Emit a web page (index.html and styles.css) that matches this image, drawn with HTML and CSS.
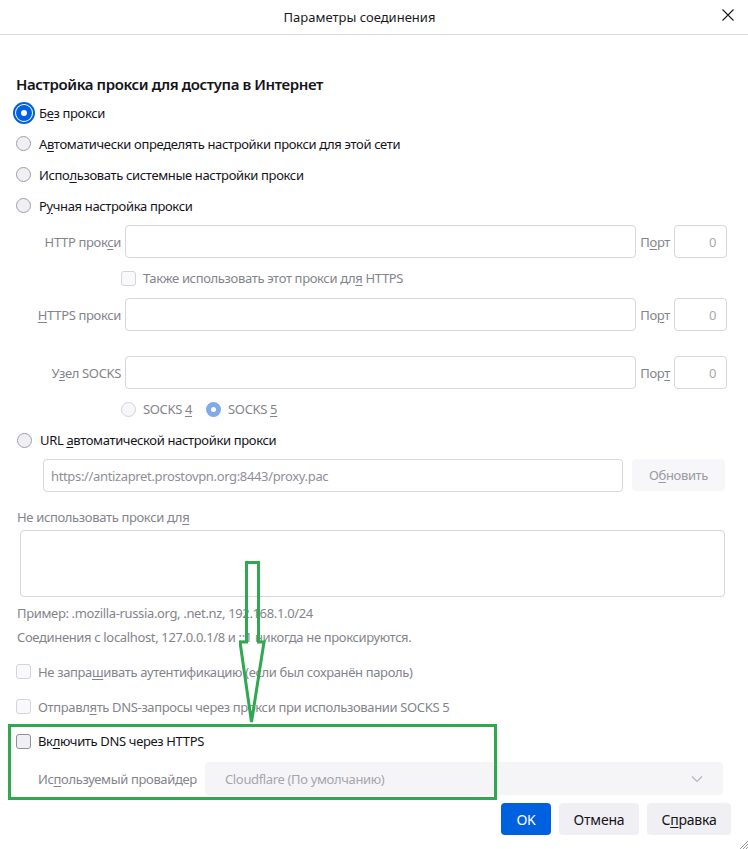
FILE: index.html
```html
<!DOCTYPE html>
<html lang="ru">
<head>
<meta charset="utf-8">
<title>Параметры соединения</title>
<link rel="stylesheet" href="styles.css">
</head>
<body>
<div class="dialog">
  <header class="titlebar">
    <span class="title">Параметры соединения</span>
    <svg class="close" width="12" height="12" viewBox="0 0 12 12"><path d="M0.5 0.5L11.5 11.5M11.5 0.5L0.5 11.5" stroke="#1a1a1a" stroke-width="1.1" fill="none"/></svg>
  </header>

  <main class="content">
    <h1 class="heading">Настройка прокси для доступа в Интернет</h1>

    <div class="radios">
      <label class="radio-row"><span class="radio checked-focus"></span><span>Б<u>е</u>з прокси</span></label>
      <label class="radio-row"><span class="radio"></span><span>А<u>в</u>томатически определять настройки прокси для этой сети</span></label>
      <label class="radio-row"><span class="radio"></span><span>Испо<u>л</u>ьзовать системные настройки прокси</span></label>
      <label class="radio-row"><span class="radio"></span><span>Р<u>у</u>чная настройка прокси</span></label>
    </div>

    <div class="manual">
      <div class="field-row">
        <span class="field-label">HTTP прок<u>с</u>и</span>
        <span class="input"></span>
        <span class="port-label">П<u>о</u>рт</span>
        <span class="input port">0</span>
      </div>
      <div class="also-row">
        <span class="check disabled"></span>
        <span class="muted">Также использовать этот прокси дл<u>я</u> HTTPS</span>
      </div>
      <div class="field-row">
        <span class="field-label"><u>H</u>TTPS прокси</span>
        <span class="input"></span>
        <span class="port-label">По<u>р</u>т</span>
        <span class="input port">0</span>
      </div>
      <div class="field-row socks">
        <span class="field-label">У<u>з</u>ел SOCKS</span>
        <span class="input"></span>
        <span class="port-label">Пор<u>т</u></span>
        <span class="input port">0</span>
      </div>
      <div class="socks-row">
        <span class="radio disabled"></span><span class="muted">SOCKS <u>4</u></span>
        <span class="radio disabled-checked"></span><span class="muted">SOCKS <u>5</u></span>
      </div>
    </div>

    <label class="radio-row url-radio"><span class="radio"></span><span>URL <u>а</u>втоматической настройки прокси</span></label>
    <div class="url-row">
      <span class="input url-input">https://antizapret.prostovpn.org:8443/proxy.pac</span>
      <span class="btn-reload">О<u>б</u>новить</span>
    </div>

    <p class="noproxy-label muted">Не использовать прокси дл<u>я</u></p>
    <div class="textarea"></div>
    <p class="hint first muted">Пример: .mozilla-russia.org, .net.nz, 192.168.1.0/24</p>
    <p class="hint muted">Соединения с localhost, 127.0.0.1/8 и ::1 никогда не проксируются.</p>

    <div class="cb-row cb-first">
      <span class="check disabled"></span><span class="muted">Не запра<u>ш</u>ивать аутентификацию (если был сохранён пароль)</span>
    </div>
    <div class="cb-row">
      <span class="check disabled"></span><span class="muted">Отправл<u>я</u>ть DNS-запросы через прокси при использовании SOCKS 5</span>
    </div>

    <div class="cb-row doh-row">
      <span class="check"></span><span>Вк<u>л</u>ючить DNS через HTTPS</span>
    </div>
    <div class="provider-row">
      <span class="muted provider-label">Ис<u>п</u>ользуемый провайдер</span>
      <span class="select">
        <span>Cloudflare (По умолчанию)</span>
        <svg width="12" height="8" viewBox="0 0 12 8"><path d="M1 1.5L6 6.5L11 1.5" stroke="#b5b5bd" stroke-width="1.2" fill="none"/></svg>
      </span>
    </div>

    <div class="buttons">
      <span class="btn primary">OK</span>
      <span class="btn cancel">Отмена</span>
      <span class="btn help">С<u>п</u>равка</span>
    </div>
  </main>

  <div class="annot-box"></div>
  <svg class="annot-arrow" width="40" height="170" viewBox="0 0 40 170">
    <path d="M7.5 1.5H19.5V81L25 81L12.5 161L1 81L7.5 81Z" fill="none" stroke="#2fa84f" stroke-width="3" stroke-linejoin="miter"/>
  </svg>
  <svg class="grip" width="10" height="10" viewBox="0 0 10 10"><path d="M10 2L2 10M10 5L5 10M10 8L8 10" stroke="#9a9a9a" stroke-width="1"/></svg>
</div>
</body>
</html>
```

FILE: styles.css
```css
* { box-sizing: border-box; }
html, body { margin: 0; padding: 0; background: #fff; }
body {
  font-family: "Noto Sans", "Open Sans", sans-serif;
  font-size: 13px;
  letter-spacing: -0.35px;
  color: #15141a;
  width: 748px;
  height: 849px;
  overflow: hidden;
}
u { text-decoration-thickness: 1px; text-underline-offset: 2px; }
.dialog { position: relative; width: 748px; height: 849px; }

.titlebar {
  height: 35px;
  border-bottom: 1px solid #dcdcdc;
  display: flex;
  align-items: center;
  justify-content: center;
  position: relative;
}
.title { font-size: 13px; letter-spacing: 0; color: #1a1a1a; margin-right: 29px; margin-top: -1px; }
.close { position: absolute; right: 14px; top: 9px; }

.content { padding: 0 21px 0 16px; }

.heading {
  margin: 39px 0 0 0;
  font-size: 15px;
  font-weight: 600;
  letter-spacing: -0.4px;
  line-height: 20px;
  height: 20px;
}

.radios { margin-top: 3px; }
.radio-row { display: flex; align-items: center; height: 31px; gap: 8px; }
.radio {
  width: 15px; height: 15px; border-radius: 50%;
  border: 1px solid #9d9da6;
  background: #f0f0f4;
  flex: none;
}
.radio.checked-focus {
  width: 16px; height: 16px;
  border: 5px solid #0061e0;
  background: #fff;
  outline: 2px solid #0061e0;
  outline-offset: 1px;
  margin-right: -1px;
}
.radio.disabled { border-color: #d4d4da; background: #f7f7f9; }
.radio.disabled-checked { border: 5px solid #80aaea; background: #fff; }

.muted { color: #84848c; }
.field-label, .port-label { color: #84848c; }

.manual { margin-top: 4px; }
.field-row { display: flex; align-items: center; height: 33px; }
.field-row.socks { margin-top: 25px; }
.field-label { width: 105px; text-align: right; margin-right: 4px; }
.input {
  height: 33px;
  border: 1px solid #d6d6dc;
  border-radius: 4px;
  background: #fff;
  flex: 1;
  display: flex;
  align-items: center;
}
.port-label { margin: 0 4px 0 4px; }
.input.port { flex: none; width: 53px; justify-content: flex-end; padding-right: 10px; color: #a8a8b0; }

.also-row { display: flex; align-items: center; height: 40px; padding-left: 105px; gap: 7px; }
.check {
  width: 15px; height: 15px;
  border: 1px solid #8f8f9d;
  border-radius: 3px;
  background: #f0f0f4;
  flex: none;
}
.check.disabled { border-color: #d4d4da; background: #f9f9fb; }

.socks-row { display: flex; align-items: center; height: 40px; padding-left: 105px; }
.socks-row .radio { margin-right: 7px; }
.socks-row .disabled-checked { margin-left: 14px; }

.url-radio { height: 22px; margin-left: 1px; }
.url-row { display: flex; margin: 8px 0 0 27px; gap: 9px; height: 33px; }
.url-input { padding-left: 7px; color: #8f8f98; }
.btn-reload {
  width: 93px; height: 32px;
  border-radius: 4px;
  background: #f7f7f9;
  color: #9a9aa2;
  display: flex; align-items: center; justify-content: center;
  margin-right: 2px;
}

p { margin: 0; }
.noproxy-label { margin-top: 16px; line-height: 18px; margin-left: 1px; }
.textarea {
  margin: 4px 2px 0 4px;
  height: 67px;
  border: 1px solid #d6d6dc;
  border-radius: 4px;
}
.hint { line-height: 18px; margin-top: 6px; margin-left: 1px; }
.hint.first { margin-top: 7px; }

.cb-row { display: flex; align-items: center; height: 35px; gap: 7px; }
.cb-first { margin-top: 8px; }

.doh-row { height: 34px; }
.provider-row { display: flex; align-items: center; height: 33px; margin-top: 4px; padding-left: 22px; }
.provider-label { width: 167px; flex: none; white-space: nowrap; }
.select {
  flex: 1;
  height: 33px;
  margin-right: 4px;
  background: #f5f5f7;
  border-radius: 4px;
  display: flex;
  align-items: center;
  justify-content: space-between;
  padding: 0 20px;
  color: #a5a5ad;
}

.buttons { display: flex; justify-content: flex-end; gap: 8px; margin-top: 8px; margin-right: -4px; }
.btn {
  height: 32px;
  border-radius: 4px;
  background: #f0f0f4;
  display: flex; align-items: center; justify-content: center;
  font-size: 14px;
  letter-spacing: -0.2px;
}
.btn.primary { background: #0061e0; color: #fff; width: 50px; }
.btn.cancel { width: 80px; }
.btn.help { width: 84px; }

.annot-box {
  position: absolute;
  left: 8px; top: 724px;
  width: 489px; height: 76px;
  border: 3px solid #2fa84f;
}
.annot-arrow { position: absolute; left: 239px; top: 561px; }
.grip { position: absolute; right: 0; bottom: 0; }
```
